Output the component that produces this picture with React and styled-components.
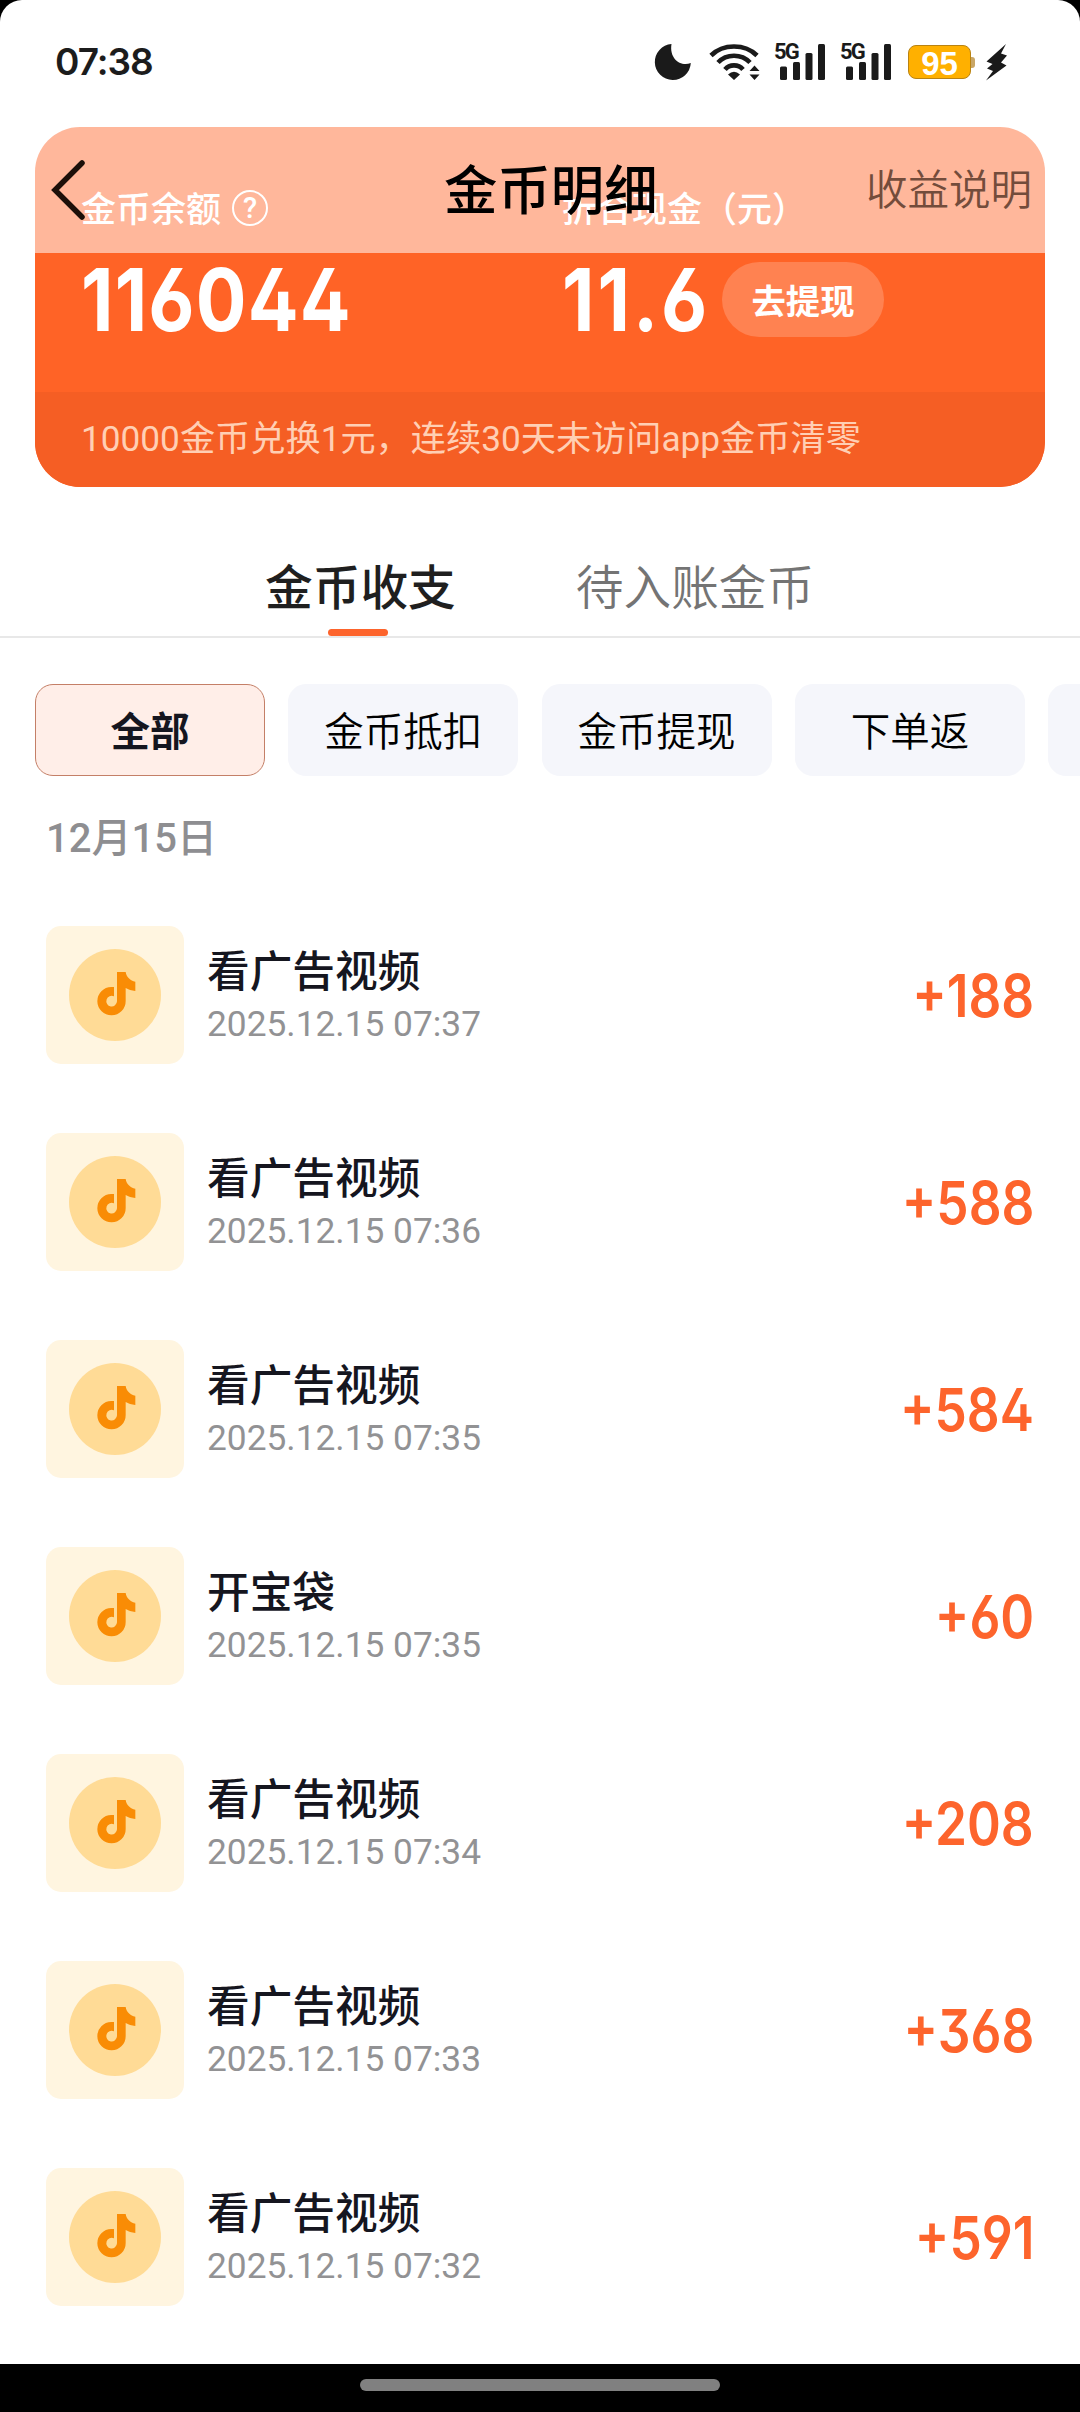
import React from "react";
import styled, { createGlobalStyle, css } from "styled-components";

const colors = {
  orange: "#ff6326",
  amount: "#fd642c",
  text: "#15161f",
  muted: "#929294"
};

const fonts = {
  cjk: `"Noto Sans CJK SC", sans-serif`,
  mixed: `Roboto, "Noto Sans CJK SC", sans-serif`,
  number: `Inter, "Noto Sans CJK SC", sans-serif`
};

const GlobalStyle = createGlobalStyle`
  * {
    box-sizing: border-box;
  }
  body {
    margin: 0;
    background: #000;
    font-family: ${fonts.cjk};
  }
`;

const Screen = styled.div`
  position: relative;
  display: flex;
  flex-direction: column;
  width: 1080px;
  height: 2412px;
  overflow: hidden;
  background: #000;
`;

const Page = styled.div`
  height: 2364px;
  overflow: hidden;
  background: #fff;
  border-radius: 22px 22px 0 0;
`;

const StatusBar = styled.div`
  display: flex;
  justify-content: space-between;
  align-items: center;
  height: 127px;
  padding: 0 73px 3px 55px;
`;

const Clock = styled.div`
  font: 600 37px/44px ${fonts.number};
  color: #1c1c1c;
  letter-spacing: -1px;
`;

const StatusIcons = styled.div`
  display: flex;
  align-items: center;
  color: #1a1a1a;
`;

const StatusIcon = styled.svg`
  display: block;
  margin-right: ${props => props.$gap || 0}px;
`;

const Signal = styled.div`
  position: relative;
  width: 52px;
  height: 38px;
  margin-right: ${props => props.$gap}px;
`;

const SignalLabel = styled.span`
  position: absolute;
  top: 0;
  left: 0;
  font: 700 22px/18px Roboto, sans-serif;
  letter-spacing: -1.8px;
`;

const Battery = styled.div`
  display: flex;
  align-items: center;
  margin-right: 11px;
  &::after {
    content: "";
    width: 4px;
    height: 11px;
    background: #c9a666;
    border-radius: 0 3px 3px 0;
  }
`;

const BatteryLevel = styled.div`
  width: 63px;
  height: 34px;
  border: 1px solid #b98312;
  border-radius: 8px;
  background: #ffb000;
  color: #fff;
  font: 700 33px/35px "Liberation Sans", sans-serif;
  text-align: center;
`;

const Header = styled.div`
  position: absolute;
  top: 111px;
  left: 0;
  display: grid;
  grid-template-columns: 444px 1fr auto;
  align-items: center;
  width: 1080px;
  height: 142px;
  padding-right: 48px;
  background: rgba(255, 255, 255, 0.54);
`;

const BackIcon = styled.svg`
  display: block;
  margin: 15px 0 0 50px;
`;

const HeaderTitle = styled.div`
  color: #000;
  font-size: 53.4px;
  font-weight: 500;
  line-height: 60px;
  padding-top: 10px;
`;

const HeaderLink = styled.div`
  color: #734c3b;
  font-size: 41.5px;
  font-weight: 350;
  line-height: 50px;
  padding-top: 10px;
`;

const Card = styled.div`
  display: flex;
  flex-direction: column;
  width: 1010px;
  height: 360px;
  margin: 0 35px;
  overflow: hidden;
  border-radius: 45px;
  background: ${colors.orange};
  color: #fff;
`;

const Balances = styled.div`
  display: grid;
  grid-template-columns: 481px 1fr;
  height: 265px;
  padding: 58px 46px 0;
`;

const Label = styled.div`
  display: flex;
  align-items: center;
  gap: 11px;
  height: 44px;
  font-size: 35px;
  font-weight: 500;
  line-height: 44px;
`;

const Help = styled.span`
  width: 36px;
  height: 36px;
  margin-top: 1px;
  border: 2px solid #fff;
  border-radius: 50%;
  font: 500 29px/32px Roboto, sans-serif;
  text-align: center;
`;

const ValueRow = styled.div`
  display: flex;
  align-items: center;
  height: 75px;
  margin-top: 33px;
`;

const Value = styled.div`
  width: ${props => props.$width}px;
  font: 700 87px/75px ${fonts.number};
  font-feature-settings: "ss01";
  letter-spacing: ${props => props.$spacing}px;
  white-space: nowrap;
  transform: scaleX(0.865);
  transform-origin: left center;
`;

const WithdrawButton = styled.button`
  width: 162px;
  height: 75px;
  padding: 0;
  border: 0;
  border-radius: 38px;
  background: rgba(255, 255, 255, 0.2);
  color: #fff;
  font: 600 34.3px/71px ${fonts.cjk};
`;

const CardNote = styled.div`
  flex: 1;
  padding: 0 46px;
  background: #f55e24;
  color: #ffcfb4;
  font: 400 35.2px/95px ${fonts.mixed};
`;

const Tabs = styled.div`
  display: flex;
  height: 151px;
  padding: 70px 0 0 265px;
  gap: 120px;
  border-bottom: 2px solid #e8e8e8;
`;

const Tab = styled.div`
  display: flex;
  flex-direction: column;
  align-items: center;
  justify-content: space-between;
  font-size: 47.7px;
  font-weight: 350;
  line-height: 56px;
  color: #747474;
  ${props =>
    props.$active &&
    css`
      color: #1f1f1f;
      font-weight: 500;
      &::after {
        content: "";
        width: 60px;
        height: 7px;
        margin-right: 4px;
        border-radius: 4px;
        background: ${colors.amount};
      }
    `}
`;

const Chips = styled.div`
  display: flex;
  gap: 23.3px;
  margin-top: 46px;
  padding-left: 35px;
  overflow: hidden;
`;

const Chip = styled.div`
  flex: 0 0 230px;
  height: 92px;
  border: 1px solid ${props => (props.$active ? "#c47f67" : "#f5f6fb")};
  border-radius: 18px;
  background: ${props => (props.$active ? "#ffeee8" : "#f5f6fb")};
  color: ${props => (props.$active ? colors.text : "#000")};
  font-size: 39.5px;
  font-weight: ${props => (props.$active ? 700 : 350)};
  line-height: 87px;
  text-align: center;
`;

const DateHeading = styled.div`
  margin: 38px 0 0 46px;
  color: #8e8e91;
  font: 500 40px/50px ${fonts.mixed};
`;

const List = styled.div`
  display: flex;
  flex-direction: column;
  gap: 69px;
  padding: 62px 46px 0;
`;

const Row = styled.div`
  display: flex;
  align-items: center;
  height: 138px;
`;

const Thumb = styled.div`
  display: flex;
  align-items: center;
  justify-content: center;
  width: 138px;
  height: 138px;
  border-radius: 15px;
  background: #fff5e0;
`;

const RowText = styled.div`
  flex: 1;
  padding-left: 23px;
`;

const RowTitle = styled.div`
  color: ${colors.text};
  font-size: 42.7px;
  font-weight: 500;
  line-height: 54px;
`;

const RowTime = styled.div`
  margin-top: 4px;
  color: ${colors.muted};
  font: 400 35.3px/50px ${fonts.mixed};
`;

const Amount = styled.div`
  color: ${colors.amount};
  font: 570 59px/71px ${fonts.number};
  font-feature-settings: "ss01";
  transform: scaleX(0.87);
  transform-origin: right center;
`;

const NavBar = styled.div`
  display: flex;
  justify-content: center;
  height: 48px;
  padding-top: 15px;
`;

const NavPill = styled.div`
  width: 360px;
  height: 12px;
  border-radius: 6px;
  background: #808080;
`;

const chips = ["全部", "金币抵扣", "金币提现", "下单返", ""];

const records = [
  { title: "看广告视频", time: "2025.12.15 07:37", amount: 188 },
  { title: "看广告视频", time: "2025.12.15 07:36", amount: 588 },
  { title: "看广告视频", time: "2025.12.15 07:35", amount: 584 },
  { title: "开宝袋", time: "2025.12.15 07:35", amount: 60 },
  { title: "看广告视频", time: "2025.12.15 07:34", amount: 208 },
  { title: "看广告视频", time: "2025.12.15 07:33", amount: 368 },
  { title: "看广告视频", time: "2025.12.15 07:32", amount: 591 }
];

const SignalBars = ({ gap }) => (
  <Signal $gap={gap}>
    <svg width="52" height="38" viewBox="0 0 52 38" fill="currentColor">
      <rect x="6" y="23.5" width="7" height="13.5" rx="1.5" />
      <rect x="19" y="19" width="7" height="18" rx="1.5" />
      <rect x="31.5" y="10" width="7" height="27" rx="1.5" />
      <rect x="44" y="1" width="7" height="36" rx="1.5" />
    </svg>
    <SignalLabel>5G</SignalLabel>
  </Signal>
);

const CoinIcon = () => (
  <svg width="138" height="138" viewBox="0 0 414 414">
    <circle cx="207" cy="207" r="138" fill="#ffdb96" />
    <path
      transform="translate(-49 -48)"
      fill="#f98c05"
      d="M262 186H288C290 200 302 213 317 215V243C306 242 296 239 288 234V273A42.500 42.500 0 1 1 245 231H253V259A16 16 0 1 0 262 274Z"
    />
  </svg>
);

const App = () => (
  <Screen>
    <GlobalStyle />
    <Page>
      <StatusBar>
        <Clock>07:38</Clock>
        <StatusIcons>
          <StatusIcon $gap={18} width="37" height="38" viewBox="0 0 37 38">
            <path
              fill="currentColor"
              d="M17.500 1A18 18 0 1 0 36.800 20C27 24 15 16 17.500 1Z"
            />
          </StatusIcon>
          <StatusIcon $gap={14} width="51" height="38" viewBox="0 0 51 38">
            <g fill="none" stroke="currentColor" strokeWidth="4.600">
              <path d="M2 12.500C14 0.500 36 0.500 48 12.500" />
              <path d="M9 19.500C17.500 10.500 32.500 10.500 41 19.500" />
              <path d="M16 26.500C20.500 21 29.500 21 34 26.500" />
            </g>
            <path
              fill="currentColor"
              d="M19 31.500Q25 26 31 31.500L25 37ZM45.500 22.500L50.500 28H40.500ZM45.500 37L50.500 31.500H40.500Z"
            />
          </StatusIcon>
          <SignalBars gap={14} />
          <SignalBars gap={16} />
          <Battery>
            <BatteryLevel>95</BatteryLevel>
          </Battery>
          <StatusIcon width="21" height="38" viewBox="0 0 21 38">
            <path
              fill="currentColor"
              d="M20 1L0.500 18.500L6.500 21L1 25.500L7 28L0 37.500L20.500 22.500L15 19.500L21 12.500L15 10.500Z"
            />
          </StatusIcon>
        </StatusIcons>
      </StatusBar>
      <Card>
        <Balances>
          <div>
            <Label>
              金币余额
              <Help>?</Help>
            </Label>
            <ValueRow>
              <Value $spacing={1.4}>116044</Value>
            </ValueRow>
          </div>
          <div>
            <Label>折合现金（元）</Label>
            <ValueRow>
              <Value $width={160} $spacing={3.5}>
                11.6
              </Value>
              <WithdrawButton>去提现</WithdrawButton>
            </ValueRow>
          </div>
        </Balances>
        <CardNote>10000金币兑换1元，连续30天未访问app金币清零</CardNote>
      </Card>
      <Tabs>
        <Tab $active>金币收支</Tab>
        <Tab>待入账金币</Tab>
      </Tabs>
      <Chips>
        {chips.map((chip, i) => (
          <Chip key={i} $active={i === 0}>
            {chip}
          </Chip>
        ))}
      </Chips>
      <DateHeading>12月15日</DateHeading>
      <List>
        {records.map((record, i) => (
          <Row key={i}>
            <Thumb>
              <CoinIcon />
            </Thumb>
            <RowText>
              <RowTitle>{record.title}</RowTitle>
              <RowTime>{record.time}</RowTime>
            </RowText>
            <Amount>+{record.amount}</Amount>
          </Row>
        ))}
      </List>
    </Page>
    <Header>
      <BackIcon width="36" height="60" viewBox="0 0 36 60">
        <path
          d="M32 3L5 30L32 57"
          fill="none"
          stroke="#1c0f09"
          strokeWidth="5.500"
          strokeLinecap="round"
        />
      </BackIcon>
      <HeaderTitle>金币明细</HeaderTitle>
      <HeaderLink>收益说明</HeaderLink>
    </Header>
    <NavBar>
      <NavPill />
    </NavBar>
  </Screen>
);

export default App;
